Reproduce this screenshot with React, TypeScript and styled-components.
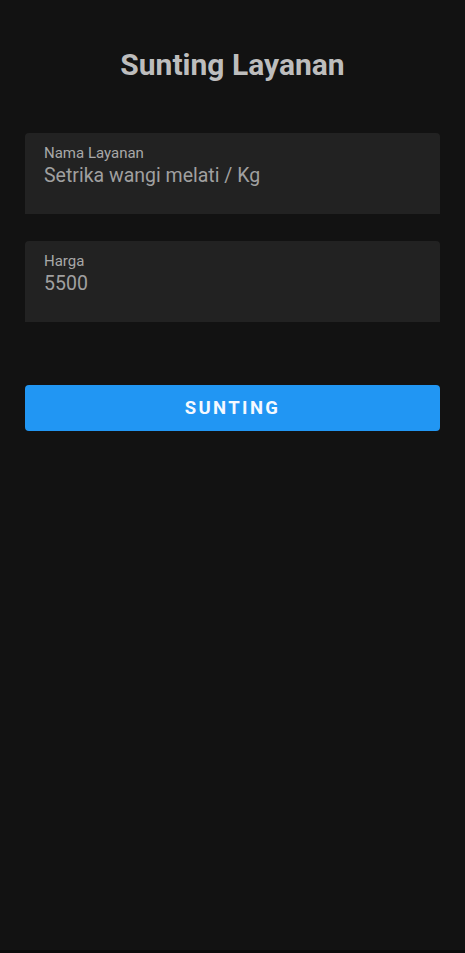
import React from "react";
import styled, { createGlobalStyle } from "styled-components";

const GlobalStyle = createGlobalStyle`
  html, body {
    margin: 0;
    padding: 0;
    background: #121212;
  }
  body {
    font-family: Roboto, "Noto Sans", sans-serif;
  }
`;

const Screen = styled.div`
  box-sizing: border-box;
  height: 953px;
  display: flex;
  flex-direction: column;
  background: #121212;
  border-bottom: 3px solid #0b0b0b;
`;

const Content = styled.div`
  flex: 1;
  padding: 0 25px;
  display: flex;
  flex-direction: column;
`;

const Title = styled.h1`
  margin: 46px 0 0;
  text-align: center;
  font-size: 30px;
  line-height: 38px;
  font-weight: 700;
  color: #bdbdbd;
`;

const Field = styled.div<{ $top: number }>`
  margin-top: ${(p) => p.$top}px;
  height: 81px;
  box-sizing: border-box;
  padding: 12px 19px 0;
  background: #222222;
  border-radius: 4px 4px 0 0;
  display: flex;
  flex-direction: column;
`;

const Label = styled.span`
  font-size: 15px;
  line-height: 17px;
  color: #a8a8a8;
`;

const Value = styled.span`
  margin-top: 2px;
  font-size: 19.5px;
  line-height: 23px;
  color: #a0a0a0;
`;

const Button = styled.button`
  margin-top: 63px;
  height: 46px;
  border: none;
  border-radius: 4px;
  background: #2196f3;
  color: #f5f9ff;
  font-family: Roboto, "Noto Sans", sans-serif;
  font-size: 18.5px;
  font-weight: 700;
  letter-spacing: 2.4px;
  text-transform: uppercase;
`;

export default function App() {
  return (
    <>
      <GlobalStyle />
      <Screen>
        <Content>
          <Title>Sunting Layanan</Title>
          <Field $top={49}>
            <Label>Nama Layanan</Label>
            <Value>Setrika wangi melati / Kg</Value>
          </Field>
          <Field $top={27}>
            <Label>Harga</Label>
            <Value>5500</Value>
          </Field>
          <Button>Sunting</Button>
        </Content>
      </Screen>
    </>
  );
}
